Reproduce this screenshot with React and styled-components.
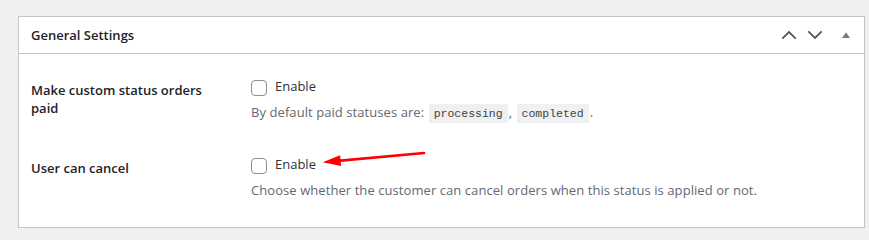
import React from "react";
import styled, { createGlobalStyle } from "styled-components";

const GlobalStyle = createGlobalStyle`
  html, body { margin: 0; padding: 0; }
  body {
    background: #f0f0f1;
    font-family: "Open Sans", "Noto Sans", sans-serif;
    color: #1d2327;
  }
`;

const Page = styled.div`
  position: relative;
  padding: 16px 4px 17px 18px;
`;

const Box = styled.section`
  background: #fff;
  border: 1px solid #c3c4c7;
`;

const Header = styled.header`
  display: flex;
  align-items: center;
  height: 36px;
  padding-left: 12px;
  border-bottom: 1px solid #c3c4c7;
`;

const Title = styled.h2`
  flex: 1;
  margin: 0 0 1px;
  font-size: 13px;
  font-weight: 600;
  line-height: 18px;
  color: #1d2327;
`;

const HandleButton = styled.button`
  display: flex;
  align-items: center;
  justify-content: center;
  width: ${(p) => p.$w}px;
  height: 36px;
  padding: 0;
  border: 0;
  background: none;
  color: ${(p) => p.$color};
  cursor: pointer;
`;

const Content = styled.div`
  padding: 23px 12px 28px 12px;
  display: flex;
  flex-direction: column;
  gap: 32px;
`;

const Row = styled.div`
  display: grid;
  grid-template-columns: 220px 1fr;
`;

const Label = styled.div`
  padding-top: 5px;
  font-size: 13px;
  font-weight: 600;
  line-height: 17.6px;
  color: #1d2327;
  max-width: 190px;
`;

const Field = styled.div`
  display: flex;
  flex-direction: column;
  gap: 7px;
`;

const CheckLine = styled.label`
  display: flex;
  align-items: flex-start;
  gap: 8px;
  font-size: 13px;
  line-height: 18px;
  color: #2c3338;
`;

const Check = styled.input.attrs({ type: "checkbox" })`
  appearance: none;
  margin: 3px 0 0;
  width: 16px;
  height: 16px;
  box-sizing: border-box;
  border: 1px solid #8c8f94;
  border-radius: 4px;
  background: #fff;
  flex: none;
`;

const Description = styled.p`
  margin: 0;
  font-size: 13px;
  line-height: 18px;
  letter-spacing: 0.07px;
  color: #646970;
`;

const Code = styled.code`
  font-family: "Liberation Mono", "DejaVu Sans Mono", monospace;
  font-size: 11.5px;
  letter-spacing: 0;
  padding: 3px 5px 3px;
  margin: 0 1px;
  background: #f0f0f1;
  color: #3c434a;
`;

const Annotation = styled.svg`
  position: absolute;
  left: 0;
  top: 0;
  pointer-events: none;
`;

const ChevronUp = () => (
  <svg width="16" height="10" viewBox="0 0 16 10" fill="none">
    <path d="M1.3 8.6 L8 2.1 L14.7 8.6" stroke="currentColor" strokeWidth="1.8" />
  </svg>
);

const ChevronDown = () => (
  <svg width="16" height="10" viewBox="0 0 16 10" fill="none">
    <path d="M1.3 1.4 L8 7.9 L14.7 1.4" stroke="currentColor" strokeWidth="1.8" />
  </svg>
);

const Triangle = () => (
  <svg width="10" height="6" viewBox="0 0 10 6">
    <path d="M1 6 L5 0.3 L9 6 Z" fill="currentColor" />
  </svg>
);

export default function App() {
  return (
    <>
      <GlobalStyle />
      <Page>
        <Box>
          <Header>
            <Title>General Settings</Title>
            <HandleButton $w={26} $color="#50575e" aria-label="Move up">
              <ChevronUp />
            </HandleButton>
            <HandleButton $w={26} $color="#50575e" aria-label="Move down">
              <ChevronDown />
            </HandleButton>
            <HandleButton $w={36} $color="#787c82" aria-label="Toggle panel">
              <Triangle />
            </HandleButton>
          </Header>
          <Content>
            <Row>
              <Label>Make custom status orders paid</Label>
              <Field>
                <CheckLine>
                  <Check />
                  Enable
                </CheckLine>
                <Description>
                  By default paid statuses are: <Code>processing</Code>, <Code>completed</Code>.
                </Description>
              </Field>
            </Row>
            <Row>
              <Label>User can cancel</Label>
              <Field>
                <CheckLine>
                  <Check />
                  Enable
                </CheckLine>
                <Description>
                  Choose whether the customer can cancel orders when this status is applied or not.
                </Description>
              </Field>
            </Row>
          </Content>
        </Box>
        <Annotation width="869" height="240" viewBox="0 0 869 240">
          <line x1="424" y1="153" x2="338" y2="160.9" stroke="#f00" strokeWidth="2.6" strokeLinecap="round" />
          <path d="M322.7 162.3 L340.1 155.2 L341.1 166.1 Z" fill="#f00" />
        </Annotation>
      </Page>
    </>
  );
}
